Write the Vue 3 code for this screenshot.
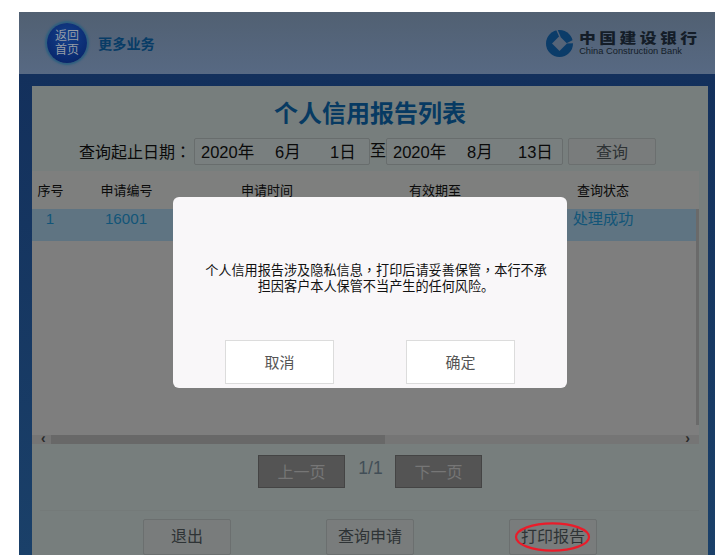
<script setup>
const columns = ['序号', '申请编号', '申请时间', '有效期至', '查询状态']
const row = ['1', '16001', '', '', '处理成功']
</script>

<template>
  <div class="page">
    <div class="app">
      <header class="head">
        <div class="back">返回<br />首页</div>
        <div class="more">更多业务</div>
        <div class="brand">
          <svg class="logo" width="28" height="29" viewBox="0 0 28 29">
            <circle cx="13.5" cy="14.5" r="13.5" fill="#0b3c69" />
            <polygon points="13.5,7 21,14.5 13.5,22 6,14.5" fill="#556478" />
            <path d="M10.5 0 L14 8" stroke="#556478" stroke-width="1.4" fill="none" />
            <polygon points="20,14.5 28,10.5 28,14.2" fill="#556478" />
          </svg>
          <div class="brand-text">
            <div class="brand-cn">中国建设银行</div>
            <div class="brand-en">China Construction Bank</div>
          </div>
        </div>
      </header>

      <main class="main">
        <section class="content">
          <h1 class="title">个人信用报告列表</h1>

          <div class="dates">
            <span class="label">查询起止日期<span class="mid">：</span></span>
            <div class="select">
              <span class="y">2020年</span><span class="m">6月</span><span class="d">1日</span>
            </div>
            <span class="to">至</span>
            <div class="select second">
              <span class="y">2020年</span><span class="m">8月</span><span class="d">13日</span>
            </div>
            <div class="btn search">查询</div>
          </div>

          <div class="table">
            <div class="grid thead">
              <div v-for="c in columns" :key="c">{{ c }}</div>
            </div>
            <div class="tbody">
              <div class="grid row">
                <div v-for="(c, i) in row" :key="i">{{ c }}</div>
              </div>
              <div class="vbar"></div>
            </div>
            <div class="hbar">
              <span class="arrow">‹</span>
              <div class="thumb"></div>
              <span class="arrow right">›</span>
            </div>
          </div>

          <div class="pager">
            <div class="page-btn">上一页</div>
            <span class="count">1/1</span>
            <div class="page-btn">下一页</div>
          </div>

          <div class="actions">
            <div class="btn">退出</div>
            <div class="btn">查询申请</div>
            <div class="btn">打印报告</div>
          </div>
        </section>
      </main>

      <svg class="circle" width="77" height="33" viewBox="0 0 77 33">
        <ellipse cx="38.5" cy="16" rx="36.5" ry="13.6" fill="none" stroke="#ea1c2a" stroke-width="2.2" />
      </svg>

      <div class="dialog">
        <p class="message">个人信用报告涉及隐私信息<span class="mid">，</span>打印后请妥善保管<span class="mid">，</span>本行不承<br />担因客户本人保管不当产生的任何风险。</p>
        <div class="dialog-actions">
          <div class="dialog-btn">取消</div>
          <div class="dialog-btn">确定</div>
        </div>
      </div>
    </div>
  </div>
</template>

<style>
html, body { margin: 0; background: #fff; }
</style>

<style scoped>
.page {
  width: 715px;
  height: 555px;
  padding: 12px 0 0 19px;
  box-sizing: border-box;
  background: #fff;
  overflow: hidden;
  font-family: "Liberation Sans", "Noto Sans CJK SC", sans-serif;
  color: #0a0a0a;
}
.mid { font-family: "Noto Sans CJK TC", sans-serif; }
.app {
  position: relative;
  height: 543px;
  display: flex;
  flex-direction: column;
  overflow: hidden;
}
.head {
  height: 62px;
  flex: none;
  display: flex;
  align-items: center;
  padding-left: 28px;
  padding-right: 33px;
  background: linear-gradient(#516072, #576983);
}
.back {
  width: 40px;
  height: 40px;
  margin-top: -1px;
  border-radius: 50%;
  background: radial-gradient(circle at 50% 35%, #15408a, #0a2a70 70%, #081b58);
  box-shadow: 0 0 2px 2px #2b5f80;
  color: #969da6;
  font-size: 12px;
  line-height: 14px;
  text-align: center;
  display: flex;
  align-items: center;
  justify-content: center;
}
.more {
  margin-left: 11px;
  font-size: 14.2px;
  font-weight: 700;
  color: #083c66;
}
.brand {
  margin-left: auto;
  display: flex;
  align-items: center;
  gap: 5px;
}
.brand-text { padding-top: 1px; }
.brand-cn {
  font-size: 14px;
  line-height: 14px;
  font-weight: 900;
  letter-spacing: 2.86px;
  white-space: nowrap;
  transform: scaleX(1.2);
  transform-origin: left center;
  color: #141d28;
}
.brand-en {
  margin-top: 1px;
  font-size: 9.3px;
  line-height: 10px;
  white-space: nowrap;
  color: #141d28;
}
.main {
  flex: 1;
  min-height: 0;
  padding: 12px 7px 0 13px;
  background: linear-gradient(#13305c, #1a4069);
}
.content {
  height: 100%;
  display: flex;
  flex-direction: column;
  overflow: hidden;
  background: #777e7d;
}
.title {
  margin: 0;
  height: 52px;
  flex: none;
  line-height: 56px;
  text-align: center;
  font-size: 24px;
  font-weight: 700;
  color: #073a62;
}
.dates {
  height: 27px;
  flex: none;
  display: flex;
  align-items: stretch;
  padding-left: 47px;
  font-size: 16.5px;
  line-height: 26px;
}
.label { width: 115px; flex: none; font-size: 16px; }
.select {
  width: 176px;
  flex: none;
  box-sizing: border-box;
  border: 1px solid #686d6d;
  border-radius: 2px;
  background: #797f7f;
  display: flex;
}
.select.second { width: 177px; }
.y { margin-left: 6px; width: 74px; }
.m { width: 55px; }
.second .m { width: 51px; }
.to { width: 16px; flex: none; text-align: center; font-size: 16px; }
.btn {
  width: 88px;
  height: 36px;
  flex: none;
  box-sizing: border-box;
  border: 1px solid #6b6f6f;
  border-radius: 2px;
  background: #797c7c;
  color: #2e3335;
  font-size: 16px;
  line-height: 34px;
  text-align: center;
}
.btn.search {
  height: 27px;
  line-height: 27px;
  margin-left: 5px;
}
.table {
  width: 667px;
  height: 273px;
  flex: none;
  margin-top: 6px;
  display: flex;
  flex-direction: column;
  background: #7e7e7e;
}
.grid {
  display: grid;
  grid-template-columns: 37px 115px 166px 170px 166px;
  text-align: center;
}
.thead {
  height: 38px;
  flex: none;
  background: #7e7f7e;
  font-size: 13px;
  line-height: 39px;
}
.tbody {
  flex: 1;
  min-height: 0;
  position: relative;
}
.row {
  height: 32px;
  grid-template-columns: 36px 116px 166px 170px 166px;
  background: #5f7482;
  color: #125578;
  font-size: 15.2px;
  line-height: 20px;
}
.vbar {
  position: absolute;
  top: 0;
  right: 0;
  bottom: 10px;
  width: 3px;
  background: #6a6a6a;
}
.hbar {
  height: 9px;
  flex: none;
  position: relative;
  background: #757575;
}
.thumb {
  position: absolute;
  left: 19px;
  top: 0;
  width: 334px;
  height: 9px;
  background: #686868;
}
.arrow {
  position: absolute;
  left: 9px;
  top: -4px;
  font-size: 14px;
  line-height: 14px;
  font-weight: 700;
  color: #2a2a2a;
}
.arrow.right { left: auto; right: 9px; }
.pager {
  height: 67px;
  flex: none;
  box-sizing: border-box;
  margin: 0 9px 0 8px;
  padding: 11px 0 0 218px;
  display: flex;
  align-items: flex-start;
  border-bottom: 1px solid #747a79;
}
.page-btn {
  width: 87px;
  height: 33px;
  box-sizing: border-box;
  border: 1px solid #444;
  background: #545454;
  color: #767676;
  font-size: 16px;
  line-height: 33px;
  text-align: center;
}
.count {
  width: 50px;
  padding-left: 1px;
  box-sizing: border-box;
  text-align: center;
  font-size: 17.5px;
  line-height: 27px;
  color: #424e57;
}
.actions {
  display: flex;
  gap: 95px;
  padding-left: 111px;
  margin-top: 8px;
}
.circle {
  position: absolute;
  left: 495px;
  top: 509px;
}
.dialog {
  position: absolute;
  left: 154px;
  top: 185px;
  width: 394px;
  height: 191px;
  border-radius: 6px;
  background: #f9f7f9;
}
.message {
  margin: 65px 0 0 32px;
  width: 342px;
  font-size: 13.15px;
  line-height: 15.5px;
  text-align: center;
  color: #111;
  white-space: nowrap;
}
.dialog-actions {
  position: absolute;
  left: 52px;
  top: 143px;
  display: flex;
  gap: 72px;
}
.dialog-btn {
  width: 109px;
  height: 44px;
  box-sizing: border-box;
  border: 1px solid #dcdcdc;
  background: #fff;
  color: #555;
  font-size: 15px;
  line-height: 44px;
  text-align: center;
}
</style>
